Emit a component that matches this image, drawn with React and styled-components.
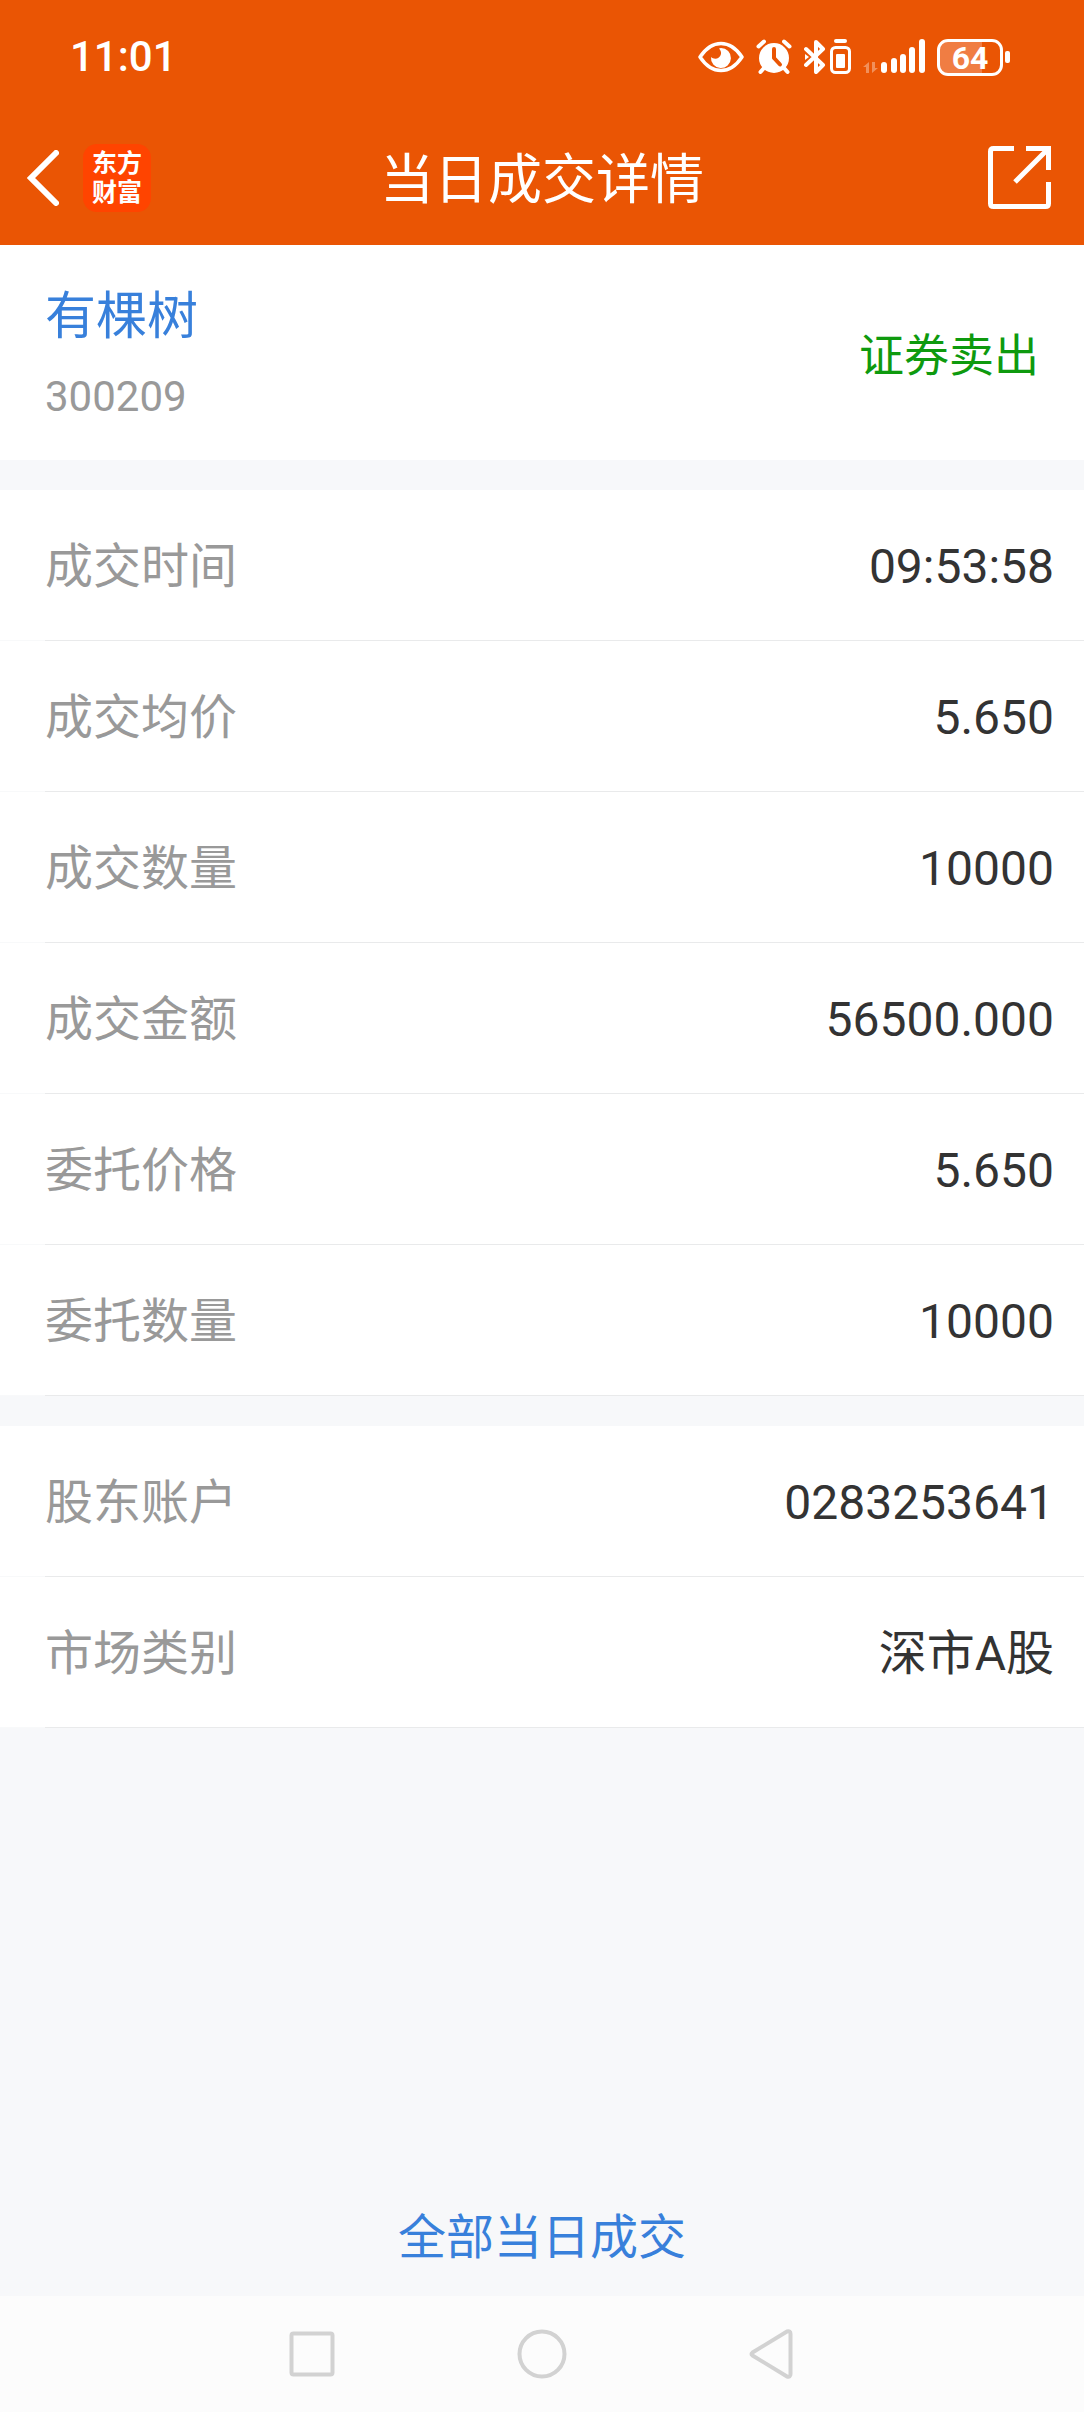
import React from "react";
import styled, { createGlobalStyle } from "styled-components";

const tradeRows = [
    { label: "成交时间", value: "09:53:58" },
    { label: "成交均价", value: "5.650" },
    { label: "成交数量", value: "10000" },
    { label: "成交金额", value: "56500.000" },
    { label: "委托价格", value: "5.650" },
    { label: "委托数量", value: "10000" },
];

const accountRows = [
    { label: "股东账户", value: "0283253641" },
    { label: "市场类别", value: "深市A股" },
];

const EyeIcon = () => (
    <svg width="46" height="32" viewBox="0 0 46 32" fill="none" aria-hidden="true">
        <path d="M2 16C8 7 15 2.500 23 2.500S38 7 44 16C38 25 31 29.500 23 29.500S8 25 2 16Z" stroke="#fff" strokeWidth="3.500" strokeLinejoin="round" />
        <path d="M23 7a10 10 0 1 1-10 9c3 3 9 2 10-3 .4-2-.6-4-2-5.500Z" fill="#fff" />
    </svg>
);

const AlarmIcon = () => (
    <svg width="36" height="36" viewBox="0 0 36 36" fill="none" aria-hidden="true">
        <circle cx="18" cy="19" r="15" fill="#fff" />
        <path d="M2.500 7.500L8 2.500M33.500 7.500L28 2.500M8 29L4.500 33M28 29L31.500 33" stroke="#fff" strokeWidth="4" strokeLinecap="round" />
        <path d="M18 10V19L24 25.500" stroke="#ea5504" strokeWidth="4" strokeLinecap="round" strokeLinejoin="round" />
    </svg>
);

const BluetoothIcon = () => (
    <svg width="47" height="36" viewBox="0 0 47 36" fill="none" aria-hidden="true">
        <path d="M2 10L19 26L12 33V3L19 10L2 26" stroke="#fff" strokeWidth="4" strokeLinecap="round" strokeLinejoin="round" />
        <path d="M1 15l4 3-4 3Z" fill="#fff" />
        <rect x="27.500" y="8.500" width="18" height="25" rx="4" stroke="#fff" strokeWidth="3" />
        <rect x="32" y="15" width="9" height="14" rx="1" fill="#fff" />
        <path d="M32 2H41" stroke="#fff" strokeWidth="4" strokeLinecap="round" />
    </svg>
);

const SignalIcon = () => (
    <svg width="62" height="36" viewBox="0 0 62 36" fill="none" aria-hidden="true">
        <path d="M0 28L6 23V34H3V28ZM15 29L9 34V23H12V29Z" fill="#fff" opacity="0.35" />
        <rect x="18" y="23" width="6" height="11" rx="3" fill="#fff" />
        <rect x="28" y="19" width="6" height="15" rx="3" fill="#fff" />
        <rect x="37" y="15" width="6" height="19" rx="3" fill="#fff" />
        <rect x="46" y="8" width="6" height="26" rx="3" fill="#fff" />
        <rect x="56" y="0" width="6" height="34" rx="3" fill="#fff" />
    </svg>
);

const BackIcon = () => (
    <svg width="32" height="56" viewBox="0 0 32 56" fill="none" aria-hidden="true">
        <path d="M29 3L4 28L29 53" stroke="#fff" strokeWidth="6" strokeLinecap="round" strokeLinejoin="miter" />
    </svg>
);

const ShareIcon = () => (
    <svg width="63" height="63" viewBox="0 0 63 63" fill="none" stroke="#fff" strokeWidth="5" aria-hidden="true">
        <path d="M26 2.500H5.500Q2.500 2.500 2.500 5.500V57.500Q2.500 60.500 5.500 60.500H57.500Q60.500 60.500 60.500 57.500V36" />
        <path d="M38 2.500H60.500V24M60 3L27 36" />
    </svg>
);

const App = () => {
    return (
        <Page>
            <GlobalStyle />
            <Header>
                <StatusBar>
                    <Clock>11:01</Clock>
                    <StatusIcons>
                        <EyeIcon />
                        <AlarmIcon />
                        <BluetoothIcon />
                        <SignalIcon />
                        <Battery>
                            <BatteryBody>64</BatteryBody>
                            <BatteryTip />
                        </Battery>
                    </StatusIcons>
                </StatusBar>
                <TitleBar>
                    <Brand>
                        <IconButton aria-label="返回">
                            <BackIcon />
                        </IconButton>
                        <Logo>
                            <span>东方</span>
                            <span>财富</span>
                        </Logo>
                    </Brand>
                    <Title>当日成交详情</Title>
                    <Actions>
                        <IconButton aria-label="分享">
                            <ShareIcon />
                        </IconButton>
                    </Actions>
                </TitleBar>
            </Header>

            <Main>
                <Stock>
                    <div>
                        <StockName href="#stock">有棵树</StockName>
                        <StockCode>300209</StockCode>
                    </div>
                    <Side>证券卖出</Side>
                </Stock>
                <DetailList rows={tradeRows} />
                <DetailList rows={accountRows} />
                <Footer>
                    <AllTrades href="#all">全部当日成交</AllTrades>
                </Footer>
            </Main>

            <SystemNav>
                <IconButton aria-label="最近任务">
                    <svg width="46" height="46" viewBox="0 0 46 46" fill="none" stroke="#d2d2d2" strokeWidth="4">
                        <rect x="2.500" y="2.500" width="41" height="41" rx="2" />
                    </svg>
                </IconButton>
                <IconButton aria-label="主页">
                    <svg width="50" height="50" viewBox="0 0 50 50" fill="none" stroke="#d2d2d2" strokeWidth="4">
                        <circle cx="25" cy="25" r="22.500" />
                    </svg>
                </IconButton>
                <IconButton aria-label="后退">
                    <svg width="44" height="50" viewBox="0 0 44 50" fill="none" stroke="#d2d2d2" strokeWidth="4" strokeLinejoin="round">
                        <path d="M3.500 23.500Q1.500 25 3.500 26.500L38 47.500Q41.500 48.500 41.500 45V5Q41.500 1.500 38 2.500Z" />
                    </svg>
                </IconButton>
            </SystemNav>
        </Page>
    )
}

const DetailList = ({ rows }) => (
    <List>
        {rows.map((row) => (
            <Row key={row.label}>
                <dt>{row.label}</dt>
                <dd>{row.value}</dd>
            </Row>
        ))}
    </List>
)

const GlobalStyle = createGlobalStyle`
    * {
        box-sizing: border-box;
    }
    body {
        margin: 0;
        font-family: Roboto, "Noto Sans CJK SC", sans-serif;
        background: #f7f8fa;
        color: #333;
    }
    a {
        text-decoration: none;
    }
    svg {
        display: block;
        flex-shrink: 0;
    }
`

const Page = styled.div`
    display: flex;
    flex-direction: column;
    min-height: 100vh;
`

const Header = styled.header`
    background: #ea5504;
    color: #fff;
`

const StatusBar = styled.div`
    display: flex;
    justify-content: space-between;
    align-items: center;
    height: 110px;
    padding: 4px 74px 0 70px;
`

const Clock = styled.time`
    font-size: 42px;
    font-weight: 500;
    line-height: 48px;
`

const StatusIcons = styled.div`
    display: flex;
    align-items: center;
    gap: 12px;
`

const Battery = styled.div`
    display: flex;
    align-items: center;
    gap: 2px;
`

const BatteryBody = styled.span`
    width: 66px;
    height: 37px;
    border: 3px solid #fff;
    border-radius: 11px;
    background: linear-gradient(to right, #f07d43 70%, #ea5504 70%);
    font-size: 32px;
    font-weight: 700;
    line-height: 32px;
    text-align: center;
`

const BatteryTip = styled.span`
    width: 5px;
    height: 12px;
    border-radius: 2px;
    background: #fff;
`

const TitleBar = styled.div`
    display: grid;
    grid-template-columns: 1fr auto 1fr;
    align-items: center;
    height: 135px;
    padding: 0 27px;
`

const Brand = styled.div`
    display: flex;
    align-items: center;
    gap: 24px;
`

const Actions = styled.div`
    display: flex;
    justify-content: flex-end;
    padding-right: 6px;
`

const IconButton = styled.button`
    display: block;
    padding: 0;
    border: none;
    background: none;
    cursor: pointer;
`

const Logo = styled.div`
    display: flex;
    flex-direction: column;
    align-items: center;
    justify-content: center;
    width: 68px;
    height: 68px;
    border-radius: 14px;
    background: #ff4400;
    font-size: 25px;
    font-weight: 700;
    line-height: 29px;
`

const Title = styled.h1`
    margin: 0;
    padding-top: 6px;
    font-size: 54px;
    font-weight: 400;
    line-height: 80px;
`

const Main = styled.main`
    flex: 1;
    display: flex;
    flex-direction: column;
    gap: 30px;
`

const Stock = styled.section`
    display: flex;
    justify-content: space-between;
    align-items: center;
    height: 215px;
    padding: 8px 45px 0;
    background: #fff;
`

const StockName = styled.a`
    display: block;
    color: #3880db;
    font-size: 51px;
    line-height: 80px;
`

const StockCode = styled.div`
    color: #999;
    font-size: 42px;
    line-height: 80px;
`

const Side = styled.div`
    color: #0e9a0e;
    font-size: 45px;
    line-height: 64px;
`

const List = styled.dl`
    margin: 0;
`

const Row = styled.div`
    display: flex;
    justify-content: space-between;
    align-items: center;
    height: 151px;
    padding: 2px 30px 0 45px;
    background: linear-gradient(to right, #f8f9fa 45px, #e9eaeb 45px) bottom / 100% 1px no-repeat, #fff;
    font-size: 48px;
    line-height: 72px;
    dt {
        color: #999;
    }
    dd {
        margin: 0;
    }
`

const Footer = styled.div`
    flex: 1;
    display: flex;
    justify-content: center;
    align-items: flex-end;
    padding-bottom: 22px;
`

const AllTrades = styled.a`
    color: #3880db;
    font-size: 48px;
    line-height: 72px;
`

const SystemNav = styled.nav`
    display: flex;
    justify-content: center;
    align-items: center;
    gap: 182px;
    height: 116px;
    padding-right: 2px;
    background: #fcfcfc;
`

export default App;
